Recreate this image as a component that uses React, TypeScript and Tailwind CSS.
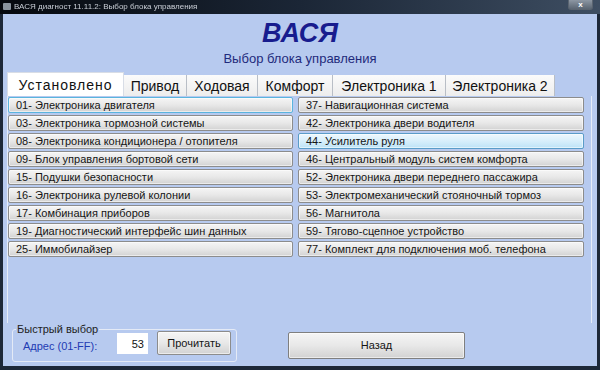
import { useState } from "react";

const leftUnits = [
  "01- Электроника двигателя",
  "03- Электроника тормозной системы",
  "08- Электроника кондиционера / отопителя",
  "09- Блок управления бортовой сети",
  "15- Подушки безопасности",
  "16- Электроника рулевой колонии",
  "17- Комбинация приборов",
  "19- Диагностический интерфейс шин данных",
  "25- Иммобилайзер",
];

const rightUnits = [
  "37- Навигационная система",
  "42- Электроника двери водителя",
  "44- Усилитель руля",
  "46- Центральный модуль систем комфорта",
  "52- Электроника двери переднего пассажира",
  "53- Электромеханический стояночный тормоз",
  "56- Магнитола",
  "59- Тягово-сцепное устройство",
  "77- Комплект для подключения моб. телефона",
];

const tabs = [
  { label: "Установлено", w: "w-[117px]" },
  { label: "Привод", w: "w-[63px]" },
  { label: "Ходовая", w: "w-[71px]" },
  { label: "Комфорт", w: "w-[75px]" },
  { label: "Электроника 1", w: "w-[113px]" },
  { label: "Электроника 2", w: "w-[109px]" },
];

function UnitButton({ label, state }: { label: string; state?: "focus" | "hover" }) {
  // normal / focused / hovered look like the win7 buttons
  let look =
    "border-[#8c8c8c] from-[#f5f5f5] via-[#e8e8e8] to-[#d2d2d2]";
  if (state == "focus") look = "border-[#5ab4de] from-[#f5f5f5] via-[#e8e8e8] to-[#d2d2d2]";
  if (state == "hover") look = "border-[#5a9cc8] from-[#eef8fe] via-[#d8effb] to-[#bde3f7]";
  return (
    <button
      className={`h-[16px] w-full border rounded-[2px] bg-gradient-to-b ${look} text-left pl-[7px] text-[11px] leading-[14px] text-[#151515] shadow-[inset_0_0_0_1px_rgba(255,255,255,0.55)] whitespace-nowrap overflow-hidden`}
    >
      {label}
    </button>
  );
}

export default function App() {
  const [address, setAddress] = useState("53");
  const [activeTab] = useState(0);

  return (
    <div className="w-[600px] h-[370px] flex flex-col overflow-hidden bg-[#1d2838] font-['Liberation_Sans',Arial,sans-serif]">
      {/* title bar */}
      <div className="h-[14px] flex items-start bg-gradient-to-r from-[#06090e] via-[#1b2636] to-[#3e4e62]">
        <div className="mt-[3px] ml-[3px] w-[8px] h-[7px] bg-[#8a949e] rounded-[1px]" />
        <span className="ml-[3px] mt-[2px] text-[8px] leading-[10px] text-[#c9ced6] blur-[0.3px]">
          ВАСЯ диагност 11.11.2: Выбор блока управления
        </span>
        <div className="ml-auto mr-[7px] w-[25px] h-[10px] rounded-b-[3px] border border-t-0 border-[#5a6470] bg-gradient-to-b from-[#8d97a3] to-[#5b6673] flex items-center justify-center text-[8px] leading-[8px] text-white font-bold">
          x
        </div>
      </div>

      {/* client area */}
      <div className="flex-1 mx-[3px] mb-[4px] bg-[#b7caef] flex flex-col">
        <div className="pt-[4px] text-center text-[27px] leading-[30px] font-bold italic text-[#181c8e]">
          ВАСЯ
        </div>
        <div className="mt-[3px] text-center text-[13px] leading-[15px] text-[#1f2a7c]">
          Выбор блока управления
        </div>

        {/* tab control */}
        <div className="mt-[6px] ml-[4px] mr-[5px] flex flex-col">
          <div className="h-[24px] flex items-end">
            {tabs.map((t, i) =>
              i == activeTab ? (
                <div
                  key={t.label}
                  className={`${t.w} h-[24px] flex items-center justify-center bg-white text-[14px] leading-[16px] tracking-[1px] text-[#111] border-t border-l border-r border-[#d8dde6]`}
                >
                  {t.label}
                </div>
              ) : (
                <div
                  key={t.label}
                  className={`${t.w} h-[21px] flex items-center justify-center bg-gradient-to-b from-[#fbfbfb] to-[#ededed] text-[14px] leading-[16px] text-[#111] border-r border-[#b9bec6] pt-[1px]`}
                >
                  {t.label}
                </div>
              )
            )}
          </div>

          <div className="h-[227px] border-l border-r border-[#e6ecf7] pt-[1px] flex gap-[5px]">
            <div className="w-[285px] flex flex-col gap-[2px]">
              {leftUnits.map((u, i) => (
                <UnitButton key={u} label={u} state={i == 0 ? "focus" : undefined} />
              ))}
            </div>
            <div className="w-[286px] flex flex-col gap-[2px]">
              {rightUnits.map((u, i) => (
                <UnitButton key={u} label={u} state={i == 2 ? "hover" : undefined} />
              ))}
            </div>
          </div>
        </div>

        {/* bottom */}
        <div className="flex items-start">
          <div className="relative mt-[6px] ml-[9px] w-[225px] h-[33px] border border-[#e4eaf6] rounded-[3px]">
            <span className="absolute -top-[7px] left-[3px] px-[1px] bg-[#b7caef] text-[11px] leading-[12px] text-[#1e1e1e]">
              Быстрый выбор
            </span>
            <div className="flex items-start pl-[10px] pt-[1px]">
              <span className="w-[94px] mt-[9px] text-[11px] leading-[12px] text-[#1f3bb3]">
                Адрес (01-FF):
              </span>
              <input
                className="mt-[2px] w-[31px] h-[21px] bg-white text-right pr-[4px] text-[11px] text-[#111] outline-none"
                value={address}
                onChange={(e) => setAddress(e.target.value)}
              />
              <button className="ml-[9px] w-[74px] h-[24px] border border-[#8c8c8c] rounded-[2px] bg-gradient-to-b from-[#f5f5f5] via-[#e8e8e8] to-[#d2d2d2] text-[11px] text-[#151515] shadow-[inset_0_0_0_1px_rgba(255,255,255,0.55)]">
                Прочитать
              </button>
            </div>
          </div>
          <button className="mt-[9px] ml-[51px] w-[177px] h-[27px] border border-[#7f7f7f] rounded-[2px] bg-gradient-to-b from-[#f5f5f5] via-[#e8e8e8] to-[#d2d2d2] text-[11px] text-[#151515] shadow-[inset_0_0_0_1px_rgba(255,255,255,0.55)]">
            Назад
          </button>
        </div>
      </div>
    </div>
  );
}
